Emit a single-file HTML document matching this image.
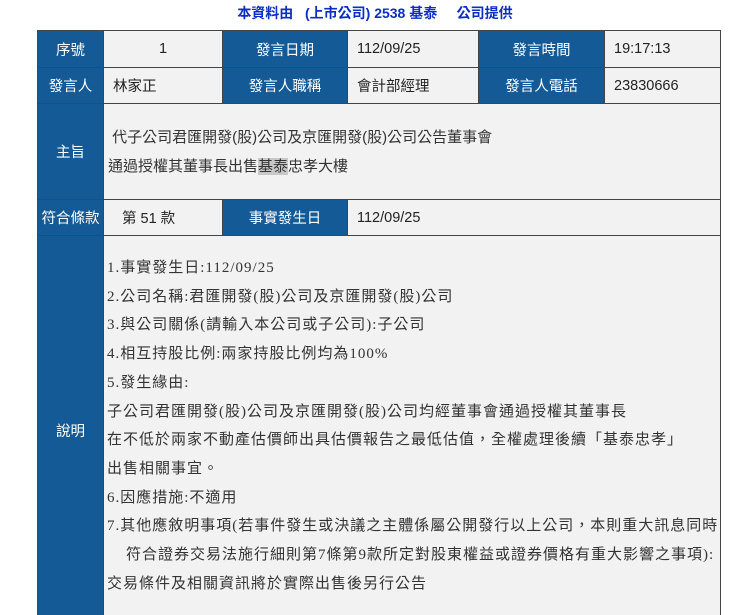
<!DOCTYPE html>
<html><head><meta charset="utf-8"><style>
html,body{margin:0;width:750px;height:615px;overflow:hidden;}
body{background:#fff;position:relative;font-family:"Liberation Sans","Noto Sans CJK TC",sans-serif;}
.t{position:absolute;top:3px;left:0;width:750px;text-align:center;color:#0b2ec4;font-weight:bold;font-size:14px;}
.c{position:absolute;box-sizing:border-box;border:1px solid #444;display:flex;align-items:center;font-size:14.5px;color:#222;}
.h{background:#135a96;color:#fff;justify-content:center;}
.v{background:#f2f2f2;padding-left:9px;}
.d{position:absolute;left:107px;top:254px;font-family:"Liberation Serif","Noto Sans CJK TC",serif;font-size:15px;letter-spacing:1.0px;line-height:28.7px;color:#333;white-space:nowrap;}
</style></head><body>
<div class="t">本資料由&nbsp;&nbsp;&nbsp;(上市公司) 2538 基泰&nbsp;&nbsp;&nbsp;&nbsp;&nbsp;公司提供</div>

<div class="c h" style="left:37px;top:30px;width:67px;height:38px">序號</div>
<div class="c v" style="left:103px;top:30px;width:120px;height:38px;justify-content:center;padding:0">1</div>
<div class="c h" style="left:222px;top:30px;width:126px;height:38px">發言日期</div>
<div class="c v" style="left:347px;top:30px;width:132px;height:38px">112/09/25</div>
<div class="c h" style="left:478px;top:30px;width:127px;height:38px">發言時間</div>
<div class="c v" style="left:604px;top:30px;width:117px;height:38px">19:17:13</div>

<div class="c h" style="left:37px;top:67px;width:67px;height:37px">發言人</div>
<div class="c v" style="left:103px;top:67px;width:120px;height:37px">林家正</div>
<div class="c h" style="left:222px;top:67px;width:126px;height:37px">發言人職稱</div>
<div class="c v" style="left:347px;top:67px;width:132px;height:37px">會計部經理</div>
<div class="c h" style="left:478px;top:67px;width:127px;height:37px">發言人電話</div>
<div class="c v" style="left:604px;top:67px;width:117px;height:37px">23830666</div>

<div class="c h" style="left:37px;top:103px;width:67px;height:97px">主旨</div>
<div class="c v" style="left:103px;top:103px;width:618px;height:97px;padding-left:4px;font-size:15px;line-height:29px;color:#333"><div>&nbsp;代子公司君匯開發(股)公司及京匯開發(股)公司公告董事會<br>通過授權其董事長出售<span style="background:#c8c8c8">基泰</span>忠孝大樓</div></div>

<div class="c h" style="left:37px;top:199px;width:67px;height:37px">符合條款</div>
<div class="c v" style="left:103px;top:199px;width:120px;height:37px;padding-left:18px">第 51 款</div>
<div class="c h" style="left:222px;top:199px;width:126px;height:37px">事實發生日</div>
<div class="c v" style="left:347px;top:199px;width:374px;height:37px">112/09/25</div>

<div class="c h" style="left:37px;top:235px;width:67px;height:390px">說明</div>
<div class="c v" style="left:103px;top:235px;width:618px;height:390px"></div>
<div class="d">1.事實發生日:112/09/25<br>2.公司名稱:君匯開發(股)公司及京匯開發(股)公司<br>3.與公司關係(請輸入本公司或子公司):子公司<br>4.相互持股比例:兩家持股比例均為100%<br>5.發生緣由:<br>子公司君匯開發(股)公司及京匯開發(股)公司均經董事會通過授權其董事長<br>在不低於兩家不動產估價師出具估價報告之最低估值，全權處理後續「基泰忠孝」<br>出售相關事宜。<br>6.因應措施:不適用<br>7.其他應敘明事項(若事件發生或決議之主體係屬公開發行以上公司，本則重大訊息同時<br>&nbsp;&nbsp;&nbsp;&nbsp;符合證券交易法施行細則第7條第9款所定對股東權益或證券價格有重大影響之事項):<br>交易條件及相關資訊將於實際出售後另行公告</div>
</body></html>
